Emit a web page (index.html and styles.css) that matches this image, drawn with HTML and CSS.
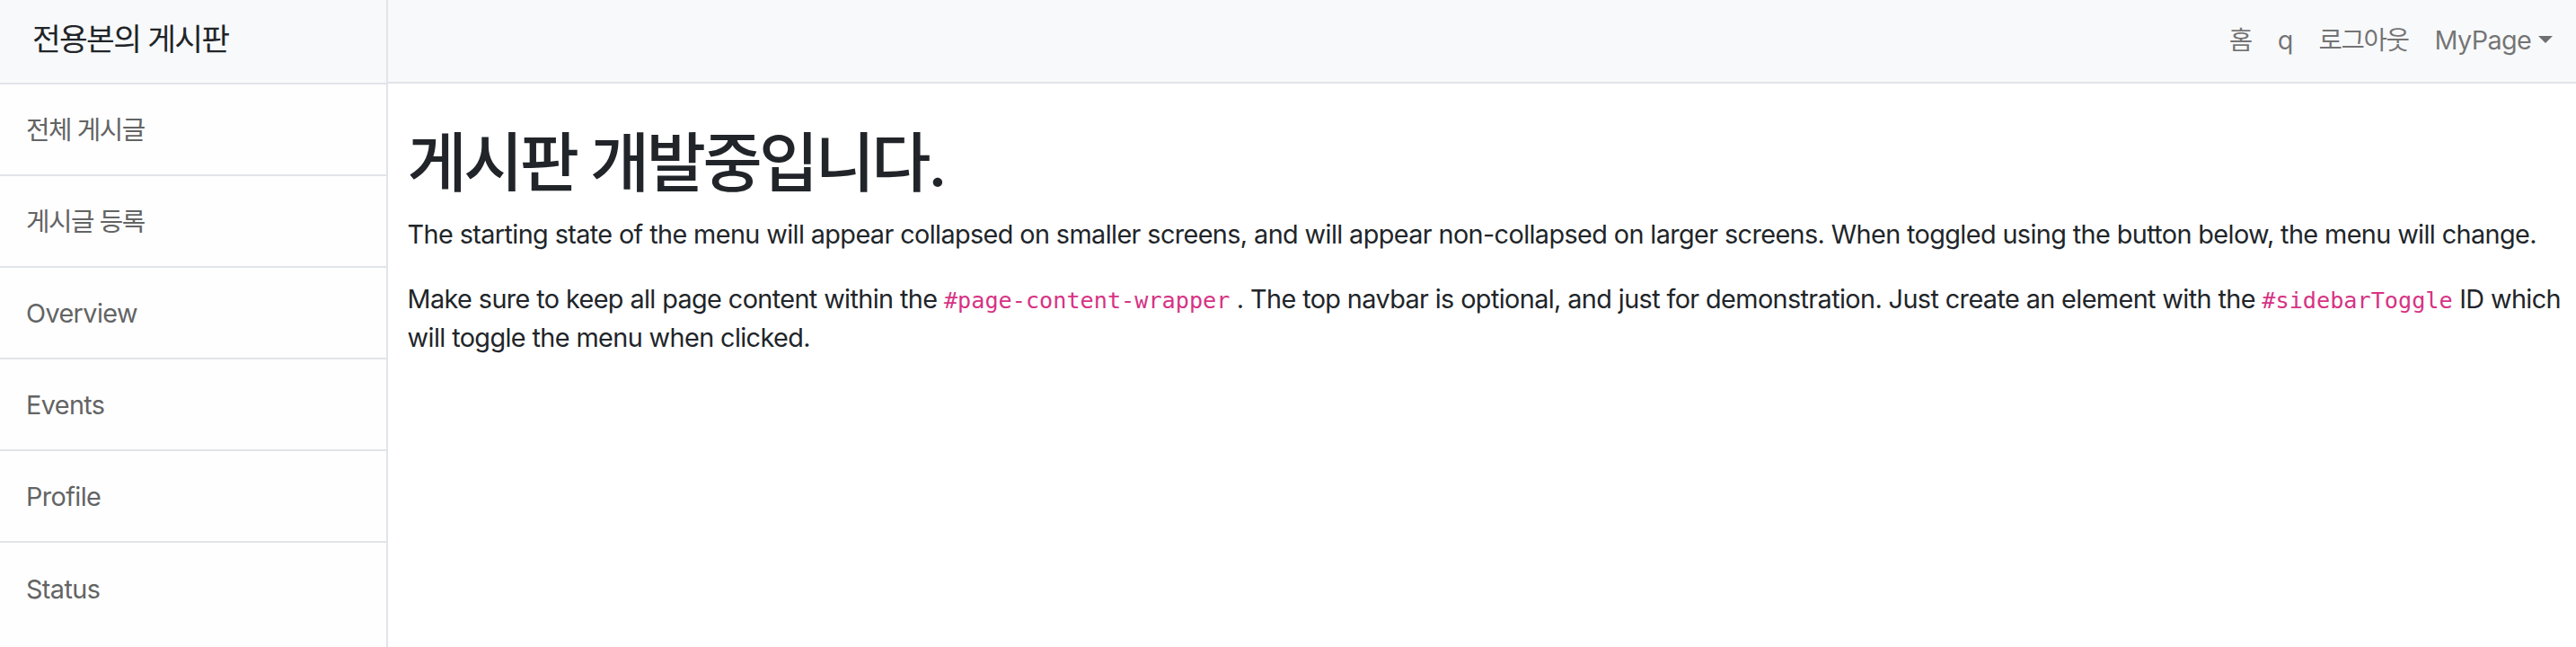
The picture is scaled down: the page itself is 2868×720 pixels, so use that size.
FILE: index.html
```html
<!DOCTYPE html>
<html lang="ko">
<head>
<meta charset="utf-8">
<title>전용본의 게시판</title>
<link rel="stylesheet" href="styles.css">
</head>
<body>
<div class="wrapper">
  <aside class="sidebar">
    <div class="sidebar-heading ko">전용본의 게시판</div>
    <nav class="list">
      <a class="item ko" href="#">전체 게시글</a>
      <a class="item ko" href="#">게시글 등록</a>
      <a class="item" href="#">Overview</a>
      <a class="item" href="#">Events</a>
      <a class="item" href="#">Profile</a>
      <a class="item" href="#">Status</a>
    </nav>
  </aside>
  <div class="page">
    <nav class="topbar">
      <ul class="nav">
        <li><a class="nav-link ko" href="#">홈</a></li>
        <li><a class="nav-link" href="#">q</a></li>
        <li><a class="nav-link ko" href="#">로그아웃</a></li>
        <li><a class="nav-link dropdown" href="#">MyPage<span class="caret"></span></a></li>
      </ul>
    </nav>
    <main class="content">
      <h1 class="ko">게시판 개발중입니다.</h1>
      <p>The starting state of the menu will appear collapsed on smaller screens, and will appear non-collapsed on larger screens. When toggled using the button below, the menu will change.</p>
      <p>Make sure to keep all page content within the <code>#page-content-wrapper</code> . The top navbar is optional, and just for demonstration. Just create an element with the <code>#sidebarToggle</code> ID which will toggle the menu when clicked.</p>
    </main>
  </div>
</div>
</body>
</html>
```
FILE: styles.css
```css
html, body {
  margin: 0;
  padding: 0;
}
body {
  font-family: "Inter", "Noto Sans CJK KR", sans-serif;
  font-size: 28.8px;
  line-height: 1.5;
  letter-spacing: -0.021em;
  color: #212529;
  background: #fff;
}
a {
  text-decoration: none;
}
.ko {
  letter-spacing: -0.05em;
}
.wrapper {
  display: flex;
  min-height: 720px;
}
.sidebar {
  width: 430px;
  flex-shrink: 0;
  border-right: 2px solid #e1e4e8;
  background: #fefefe;
}
.sidebar-heading {
  height: 88px;
  box-sizing: content-box;
  display: flex;
  align-items: center;
  padding: 0 36px 4px;
  background: #f8f9fa;
  border-bottom: 2px solid #e1e4e8;
  font-size: 34.56px;
  color: #212529;
}
.list {
  display: flex;
  flex-direction: column;
}
.item {
  height: 102px;
  display: flex;
  align-items: center;
  padding: 2px 29px 0;
  box-sizing: border-box;
  color: #636464;
  background: #fefefe;
  border-bottom: 2px solid #e1e4e8;
}
.item:last-child {
  border-bottom: 0;
}
.page {
  flex: 1;
  min-width: 0;
}
.topbar {
  height: 89px;
  display: flex;
  justify-content: flex-end;
  align-items: center;
  padding: 0 12px 2px 0;
  background: #f8f9fa;
  border-bottom: 2px solid #e1e4e8;
}
.nav {
  display: flex;
  list-style: none;
  margin: 0;
  padding: 0;
}
.nav-link {
  display: block;
  padding: 0 14.4px;
  color: rgba(0, 0, 0, 0.55);
}
.caret {
  display: inline-block;
  margin-left: 7.3px;
  vertical-align: 7.3px;
  border-top: 8.6px solid;
  border-left: 8.6px solid transparent;
  border-right: 8.6px solid transparent;
}
.content {
  padding: 0 8px 0 21.6px;
}
h1 {
  margin: 45px 0 14.4px;
  font-size: 72px;
  font-weight: 500;
  line-height: 1.2;
}
p {
  margin: 0 0 28.8px;
}
code {
  font-family: "DejaVu Sans Mono", monospace;
  font-size: 0.875em;
  letter-spacing: 0;
  color: #d63384;
}
```
